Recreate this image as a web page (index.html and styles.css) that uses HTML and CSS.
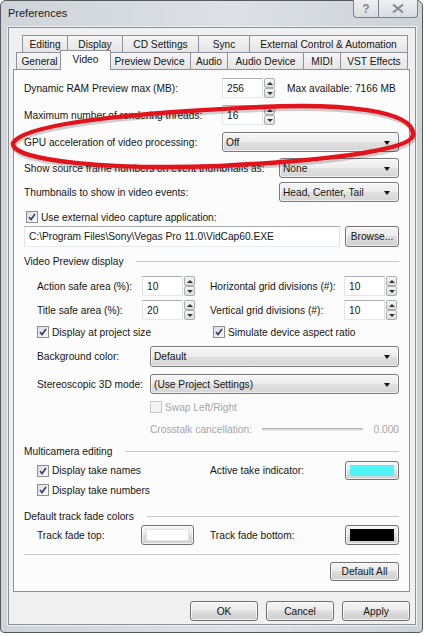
FILE: index.html
```html
<!DOCTYPE html>
<html lang="en">
<head>
  <meta charset="UTF-8" />
  <title>Preferences</title>
  <link rel="stylesheet" href="styles.css">
</head>
<body>
  <div class="screen">
    <div class="window">
      <div class="titlebar">
        <span class="title">Preferences</span>
        <div class="caption-buttons">
          <span class="cap-btn help">?</span>
          <span class="cap-btn close">
            <svg width="14" height="11" viewBox="0 0 14 11"><path d="M2 1.5l10 8M12 1.5l-10 8" /></svg>
          </span>
        </div>
      </div>

      <div class="client">
        <div class="tabs">
          <div class="tab-row back">
            <span class="tab t-editing">Editing</span>
            <span class="tab t-display">Display</span>
            <span class="tab t-cd">CD Settings</span>
            <span class="tab t-sync">Sync</span>
            <span class="tab t-external">External Control &amp; Automation</span>
          </div>
          <div class="tab-row front">
            <span class="tab t-general">General</span>
            <span class="tab t-video selected">Video</span>
            <span class="tab t-preview">Preview Device</span>
            <span class="tab t-audio">Audio</span>
            <span class="tab t-audiodev">Audio Device</span>
            <span class="tab t-midi">MIDI</span>
            <span class="tab t-vst">VST Effects</span>
          </div>
        </div>

        <div class="panel">
          <div class="row">
            <span class="lbl lbl-main">Dynamic RAM Preview max (MB):</span>
            <span class="textbox num">256</span>
            <span class="spinner"><i class="up"></i><i class="down"></i></span>
            <span class="note">Max available: 7166 MB</span>
          </div>
          <div class="row mt7">
            <span class="lbl lbl-main">Maximum number of rendering threads:</span>
            <span class="textbox num">16</span>
            <span class="spinner"><i class="up"></i><i class="down"></i></span>
          </div>
          <div class="row mt7">
            <span class="lbl lbl-main">GPU acceleration of video processing:</span>
            <span class="select grow">Off</span>
          </div>
          <div class="row mt6">
            <span class="lbl lbl-long">Show source frame numbers on event thumbnails as:</span>
            <span class="select grow">None</span>
          </div>
          <div class="row mt4">
            <span class="lbl lbl-long">Thumbnails to show in video events:</span>
            <span class="select grow">Head, Center, Tail</span>
          </div>
          <div class="row thin mt8">
            <label class="check first"><span class="box"><svg viewBox="0 0 10 10"><path d="M2 5l2 2.5 4-5.5" /></svg></span>Use external video capture application:</label>
          </div>
          <div class="row tall mt2">
            <span class="textbox grow">C:\Program Files\Sony\Vegas Pro 11.0\VidCap60.EXE</span>
            <span class="btn browse">Browse...</span>
          </div>

          <div class="row thin mt7 group-title">Video Preview display</div>
          <div class="row indent mt8">
            <span class="lbl lbl-safe">Action safe area (%):</span>
            <span class="textbox num">10</span>
            <span class="spinner"><i class="up"></i><i class="down"></i></span>
            <span class="lbl lbl-grid">Horizontal grid divisions (#):</span>
            <span class="textbox num">10</span>
            <span class="spinner"><i class="up"></i><i class="down"></i></span>
          </div>
          <div class="row indent mt4">
            <span class="lbl lbl-safe">Title safe area (%):</span>
            <span class="textbox num">20</span>
            <span class="spinner"><i class="up"></i><i class="down"></i></span>
            <span class="lbl lbl-grid">Vertical grid divisions (#):</span>
            <span class="textbox num">10</span>
            <span class="spinner"><i class="up"></i><i class="down"></i></span>
          </div>
          <div class="row thin indent mt5">
            <label class="check col-left"><span class="box"><svg viewBox="0 0 10 10"><path d="M2 5l2 2.5 4-5.5" /></svg></span>Display at project size</label>
            <label class="check"><span class="box"><svg viewBox="0 0 10 10"><path d="M2 5l2 2.5 4-5.5" /></svg></span>Simulate device aspect ratio</label>
          </div>
          <div class="row tall indent mt7">
            <span class="lbl lbl-combo">Background color:</span>
            <span class="select grow">Default</span>
          </div>
          <div class="row indent mt7">
            <span class="lbl lbl-combo">Stereoscopic 3D mode:</span>
            <span class="select grow">(Use Project Settings)</span>
          </div>
          <div class="row thin indent mt6">
            <label class="check disabled offset"><span class="box"></span>Swap Left/Right</label>
          </div>
          <div class="row thin indent mt8 disabled">
            <span class="offset">Crosstalk cancellation:</span>
            <span class="slider"></span>
            <span>0.000</span>
          </div>

          <div class="row thin mt8 group-title">Multicamera editing</div>
          <div class="row short indent mt3">
            <label class="check col-take"><span class="box"><svg viewBox="0 0 10 10"><path d="M2 5l2 2.5 4-5.5" /></svg></span>Display take names</label>
            <span class="lbl lbl-color">Active take indicator:</span>
            <span class="btn swatch-btn"><span class="swatch cyan"></span></span>
          </div>
          <div class="row thin indent mt3">
            <label class="check"><span class="box"><svg viewBox="0 0 10 10"><path d="M2 5l2 2.5 4-5.5" /></svg></span>Display take numbers</label>
          </div>

          <div class="row thin mt12 group-title">Default track fade colors</div>
          <div class="row indent mt2">
            <span class="lbl lbl-fade">Track fade top:</span>
            <span class="btn swatch-btn small"><span class="swatch white"></span></span>
            <span class="lbl lbl-color fade-bottom">Track fade bottom:</span>
            <span class="btn swatch-btn"><span class="swatch black"></span></span>
          </div>

          <div class="separator"></div>
          <div class="row short mt7 end">
            <span class="btn default-all">Default All</span>
          </div>
        </div>

        <div class="dialog-buttons">
          <span class="btn">OK</span>
          <span class="btn">Cancel</span>
          <span class="btn">Apply</span>
        </div>
      </div>
    </div>

    <svg class="annotation" width="425" height="636" viewBox="0 0 425 636">
      <path class="mark-shadow" d="M13 143 C25 122 150 112 260 107 C340 103 415 110 413 135 C412 150 330 160 220 166 C120 170 10 162 13 143 Z" />
      <path class="mark" d="M13 143 C25 122 150 112 260 107 C340 103 415 110 413 135 C412 150 330 160 220 166 C120 170 10 162 13 143 Z" />
    </svg>
  </div>
</body>
</html>
```

FILE: styles.css
```css
* { box-sizing: border-box; }
body {
  margin: 0;
  background: #fff;
  font-family: 'Liberation Sans', Arial, sans-serif;
  font-size: 10.2px;
  color: #151515;
}
.screen {
  position: relative;
  width: 425px;
  height: 636px;
}

/* window frame */
.window {
  width: 423px;
  height: 633px;
  display: flex;
  flex-direction: column;
  padding: 0 6px 7px 7px;
  border: 1px solid #55595e;
  border-radius: 6px 6px 4px 4px;
  background: linear-gradient(90deg, #cfd4d9, #dde1e5 55%, #cdd2d7);
}
.titlebar {
  height: 26px;
  display: flex;
  align-items: flex-start;
}
.title {
  line-height: 25px;
  font-size: 11px;
  color: #1c1c1c;
}
.caption-buttons {
  display: flex;
  margin: -1px -2px 0 auto;
  height: 18px;
}
.cap-btn {
  display: flex;
  align-items: center;
  justify-content: center;
  border: 1px solid #7d8288;
  border-top: none;
  background: linear-gradient(#eef0f2, #d9dde1);
  color: #80858c;
}
.cap-btn.help {
  width: 25px;
  border-right: none;
  border-radius: 0 0 0 4px;
  font-weight: bold;
  font-size: 12px;
}
.cap-btn.close {
  width: 40px;
  border-radius: 0 0 4px 0;
}
.cap-btn.close path {
  stroke: #868b92;
  stroke-width: 2.2;
  fill: none;
}

.client {
  flex: 1;
  display: flex;
  flex-direction: column;
  padding: 7px 5px 0 4px;
  border: 1px solid #8c9197;
  box-shadow: 0 0 0 1px #eef1f4;
  background: #f0f0f0;
}

/* tabs */
.tabs {
  height: 34px;
  display: flex;
  flex-direction: column;
}
.tab-row {
  display: flex;
  height: 17px;
  align-items: flex-end;
}
.tab-row.back { padding-left: 9px; }
.tab-row.front { padding-left: 3px; }
.tab {
  height: 17px;
  display: flex;
  align-items: center;
  justify-content: center;
  margin-right: -1px;
  border: 1px solid #8e9199;
  border-bottom: none;
  background: linear-gradient(#f5f5f5, #e5e5e5);
  white-space: nowrap;
}
.t-editing { width: 46px; }
.t-display { width: 56px; }
.t-cd { width: 77px; }
.t-sync { width: 52px; }
.t-external { width: 159px; }
.t-general { width: 47px; }
.t-preview { width: 83px; }
.t-audio { width: 38px; }
.t-audiodev { width: 77px; }
.t-midi { width: 38px; }
.t-vst { width: 68px; }
.tab.selected {
  position: relative;
  z-index: 1;
  width: 51px;
  height: 20px;
  margin: 0 -3px -1px -2px;
  background: #fcfcfc;
  padding-bottom: 3px;
}

/* tab page */
.panel {
  height: 523px;
  padding: 8px 10px;
  border: 1px solid #8e9199;
  background: #fcfcfc;
  display: flex;
  flex-direction: column;
}
.row {
  display: flex;
  align-items: center;
  height: 20px;
  flex-shrink: 0;
  white-space: nowrap;
}
.row.thin { height: 14px; }
.row.tall { height: 21px; }
.row.short { height: 19px; }
.row.indent { padding-left: 13px; }
.row.end { justify-content: flex-end; }
.mt2 { margin-top: 2px; }
.mt3 { margin-top: 3px; }
.mt4 { margin-top: 4px; }
.mt5 { margin-top: 5px; }
.mt6 { margin-top: 6px; }
.mt7 { margin-top: 7px; }
.mt8 { margin-top: 8px; }
.mt12 { margin-top: 12px; }

.lbl { flex-shrink: 0; }
.lbl-main { width: 198px; }
.lbl-long { width: 255px; }
.lbl-safe { width: 105px; }
.lbl-grid { width: 134px; margin-left: 15px; }
.lbl-combo { width: 113px; }
.lbl-color { width: 135px; }
.lbl-fade { width: 104px; }
.fade-bottom { margin-left: 16px; }
.note { margin-left: 12px; }
.grow { flex: 1; }

.textbox {
  height: 100%;
  display: flex;
  align-items: center;
  padding-left: 4px;
  background: #fff;
  border: 1px solid #abadb3;
  border-color: #abadb3 #dbdfe6 #e3e9ef #e2e3ea;
}
.textbox.num { width: 41px; }

.spinner {
  width: 11px;
  height: 20px;
  margin-left: 1px;
  display: flex;
  flex-direction: column;
}
.spinner i {
  flex: 1;
  display: flex;
  align-items: center;
  justify-content: center;
  border: 1px solid #acacac;
  border-radius: 2px;
  background: linear-gradient(#f6f6f6, #dedede);
}
.spinner i::before {
  content: "";
  border-left: 3px solid transparent;
  border-right: 3px solid transparent;
}
.spinner .up::before { border-bottom: 3px solid #333; }
.spinner .down::before { border-top: 3px solid #333; }

.select {
  height: 100%;
  display: flex;
  align-items: center;
  padding-left: 3px;
  border: 1px solid #7a7a7a;
  border-radius: 3px;
  background: linear-gradient(#f7f7f7, #ececec 50%, #e0e0e0 51%, #d6d6d6);
  box-shadow: inset 0 0 0 1px rgba(255, 255, 255, 0.6);
}
.select::after {
  content: "";
  margin: 1px 8px 0 auto;
  border-left: 3.5px solid transparent;
  border-right: 3.5px solid transparent;
  border-top: 4px solid #111;
}

.btn {
  height: 100%;
  display: flex;
  align-items: center;
  justify-content: center;
  border: 1px solid #707070;
  border-radius: 3px;
  background: linear-gradient(#f4f4f4, #ebebeb 45%, #dddddd 50%, #cfcfcf);
  box-shadow: inset 0 0 0 1px rgba(255, 255, 255, 0.7);
}
.browse { width: 54px; margin-left: 5px; }
.default-all { width: 69px; }

.swatch-btn {
  width: 54px;
  padding: 3px 4px;
}
.swatch-btn.small { width: 53px; }
.swatch {
  flex: 1;
  height: 100%;
}
.swatch.cyan { background: #50f3f6; }
.swatch.white { background: #fff; border: 1px solid #e2e2e2; }
.swatch.black { background: #000; }

/* checkboxes */
.check {
  display: flex;
  align-items: center;
}
.check.first { margin-left: 2px; }
.check.col-left { width: 176px; }
.check.col-take { width: 173px; }
.box {
  width: 12px;
  height: 12px;
  margin-right: 3px;
  display: flex;
  align-items: center;
  justify-content: center;
  border: 1px solid #8f8f8f;
  background: linear-gradient(135deg, #dcdcdc, #fbfbfb);
}
.box svg {
  width: 10px;
  height: 10px;
}
.box path {
  fill: none;
  stroke: #32467a;
  stroke-width: 1.7;
}
.disabled { color: #a6a6a6; }
.check.disabled .box {
  border-color: #c6c6c6;
  background: #f4f4f4;
}
.offset { margin-left: 113px; }
.slider {
  flex: 1;
  height: 3px;
  margin: 0 11px 0 10px;
  border-top: 1px solid #b4b4b4;
  border-bottom: 1px solid #eaeaea;
  background: #dcdcdc;
}

.group-title::after {
  content: "";
  flex: 1;
  height: 1px;
  margin-left: 13px;
  background: #c7c7c7;
}
.separator {
  height: 1px;
  margin-top: 9px;
  flex-shrink: 0;
  background: #c7c7c7;
  box-shadow: 0 1px 0 #fff;
}

.dialog-buttons {
  display: flex;
  justify-content: flex-end;
  gap: 8px;
  margin-top: 9px;
  height: 20px;
}
.dialog-buttons .btn { width: 68px; }

/* red hand-drawn marker over the GPU row */
.annotation {
  position: absolute;
  top: 0;
  left: 0;
  pointer-events: none;
}
.mark {
  fill: none;
  stroke: #e3131b;
  stroke-width: 4.5;
}
.mark-shadow {
  fill: none;
  stroke: rgba(0, 0, 0, 0.18);
  stroke-width: 4;
  transform: translate(1px, 3px);
}
```
